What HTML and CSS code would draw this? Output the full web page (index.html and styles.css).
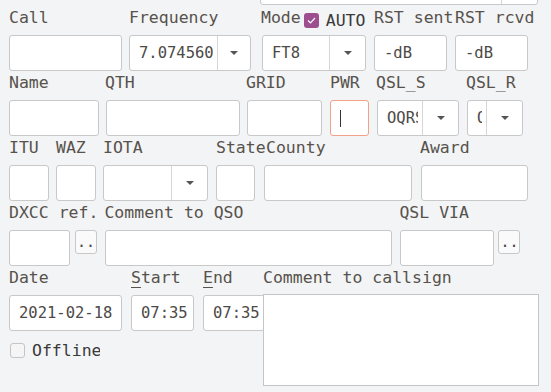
FILE: index.html
```html
<!DOCTYPE html>
<html lang="en">
<head>
    <meta charset="UTF-8">
    <title>QSO Entry</title>
    <link rel="stylesheet" href="styles.css">
</head>
<body>
    <div class="form">
        <!-- tail of the row above, scrolled out of view -->
        <div class="row prev">
            <div class="combo prev-combo">
                <span class="combo-text"></span>
                <span class="combo-btn"></span>
            </div>
        </div>

        <div class="row">
            <div class="field f-call">
                <label>Call</label>
                <input class="input" type="text">
            </div>
            <div class="field f-freq">
                <label>Frequency</label>
                <div class="combo">
                    <span class="combo-text">7.074560</span>
                    <span class="combo-btn"><i class="arrow"></i></span>
                </div>
            </div>
            <div class="field f-mode">
                <label class="mode-label">
                    <span>Mode</span>
                    <span class="check checked">
                        <svg width="15" height="15" viewBox="0 0 15 15"><path d="M4 7.5 L6.5 10 L11 5" fill="none" stroke="#fff" stroke-width="1.2"/></svg>
                    </span>
                    <span class="check-text auto">AUTO</span>
                </label>
                <div class="combo">
                    <span class="combo-text">FT8</span>
                    <span class="combo-btn"><i class="arrow"></i></span>
                </div>
            </div>
            <div class="field f-rst">
                <label>RST sent</label>
                <input class="input" type="text" value="-dB">
            </div>
            <div class="field f-rst">
                <label>RST rcvd</label>
                <input class="input" type="text" value="-dB">
            </div>
        </div>

        <div class="row">
            <div class="field f-name">
                <label>Name</label>
                <input class="input" type="text">
            </div>
            <div class="field f-qth">
                <label>QTH</label>
                <input class="input" type="text">
            </div>
            <div class="field f-grid">
                <label>GRID</label>
                <input class="input" type="text">
            </div>
            <div class="field f-pwr">
                <label>PWR</label>
                <div class="input focus"><span class="caret"></span></div>
            </div>
            <div class="field f-qsls">
                <label>QSL_S</label>
                <div class="combo">
                    <span class="combo-text">OQRS</span>
                    <span class="combo-btn"><i class="arrow"></i></span>
                </div>
            </div>
            <div class="field f-qslr">
                <label>QSL_R</label>
                <div class="combo">
                    <span class="combo-text">Q</span>
                    <span class="combo-btn"><i class="arrow"></i></span>
                </div>
            </div>
        </div>

        <div class="row">
            <div class="field f-itu">
                <label>ITU</label>
                <input class="input" type="text">
            </div>
            <div class="field f-waz">
                <label>WAZ</label>
                <input class="input" type="text">
            </div>
            <div class="field f-iota">
                <label>IOTA</label>
                <div class="combo">
                    <span class="combo-text"></span>
                    <span class="combo-btn"><i class="arrow"></i></span>
                </div>
            </div>
            <div class="field f-state">
                <label>State</label>
                <input class="input" type="text">
            </div>
            <div class="field f-county">
                <label>County</label>
                <input class="input" type="text">
            </div>
            <div class="field f-award">
                <label>Award</label>
                <input class="input" type="text">
            </div>
        </div>

        <div class="row">
            <div class="field f-dxcc">
                <label>DXCC ref.</label>
                <div class="inline">
                    <input class="input" type="text">
                    <button class="dots">..</button>
                </div>
            </div>
            <div class="field f-comment">
                <label>Comment to QSO</label>
                <input class="input" type="text">
            </div>
            <div class="field f-via">
                <label>QSL VIA</label>
                <div class="inline">
                    <input class="input" type="text">
                    <button class="dots">..</button>
                </div>
            </div>
        </div>

        <div class="bottom">
            <div class="left">
                <div class="row">
                    <div class="field f-date">
                        <label>Date</label>
                        <input class="input" type="text" value="2021-02-18">
                    </div>
                    <div class="field f-start">
                        <label><u>S</u>tart</label>
                        <input class="input" type="text" value="07:35">
                    </div>
                    <div class="field f-end">
                        <label><u>E</u>nd</label>
                        <input class="input" type="text" value="07:35">
                    </div>
                </div>
                <div class="offline">
                    <span class="check"></span>
                    <span class="check-text">Offline</span>
                </div>
            </div>
            <div class="field f-memo">
                <label>Comment to callsign</label>
                <textarea class="memo"></textarea>
            </div>
        </div>
    </div>
</body>
</html>
```

FILE: styles.css
```css
body {
    margin: 0;
    background: #f3f4f6;
    font-family: "DejaVu Sans Mono", monospace;
    font-size: 16.5px;
    color: #57524c;
    overflow: hidden;
}
.form {
    padding-left: 9px;
}
.row {
    display: flex;
    height: 65px;
}
.prev {
    height: 5px;
    margin-bottom: 1px;
    overflow: hidden;
    align-items: flex-end;
}
.prev-combo {
    margin-left: 251px;
    width: 278px;
    flex-shrink: 0;
}
.field {
    display: flex;
    flex-direction: column;
    flex-shrink: 0;
}
.field label {
    display: block;
    height: 29px;
    line-height: 23px;
    white-space: nowrap;
}
u {
    text-underline-offset: 4px;
}
.input {
    box-sizing: border-box;
    width: 100%;
    height: 36px;
    margin: 0;
    padding: 0 0 0 9px;
    border: 1px solid #c8c8c8;
    border-radius: 3px;
    background: #fff;
    font: inherit;
    font-size: 15.5px;
    color: #4d4a47;
    outline: none;
}
.focus {
    display: flex;
    align-items: center;
    border-color: #f2a286;
}
.caret {
    width: 1px;
    height: 17px;
    background: #333;
}
.combo {
    box-sizing: border-box;
    display: flex;
    height: 36px;
    border: 1px solid #c8c8c8;
    border-radius: 3px;
    background: #fff;
    overflow: hidden;
}
.combo-text {
    flex: 1;
    margin-right: 4px;
    padding-left: 9px;
    font-size: 15.5px;
    line-height: 34px;
    overflow: hidden;
    white-space: nowrap;
    color: #4d4a47;
}
.combo-btn {
    width: 35px;
    border-left: 1px solid #d6d6d6;
    display: flex;
    align-items: center;
    justify-content: center;
}
.arrow {
    width: 0;
    height: 0;
    border-left: 4.5px solid transparent;
    border-right: 4.5px solid transparent;
    border-top: 4.5px solid #555;
}
.inline {
    display: flex;
    align-items: flex-start;
}
.dots {
    box-sizing: border-box;
    width: 22px;
    height: 24px;
    padding: 0;
    border: 1px solid #c8c8c8;
    border-radius: 3px;
    background: #fafafa;
    font: inherit;
    font-size: 15px;
    line-height: 20px;
    color: #444;
    flex-shrink: 0;
}
.check {
    display: block;
    box-sizing: border-box;
    width: 15px;
    height: 15px;
    border: 1px solid #c5c5c5;
    border-radius: 3px;
    background: #f5f5f5;
    flex-shrink: 0;
}
.checked {
    border: none;
    background: #9c4e8f;
}
.check svg {
    display: block;
}
.check-text {
    color: #3a3a3a;
}

/* row 1 */
.f-call { width: 113px; }
.f-freq { width: 122px; margin-left: 7px; }
.f-freq .combo-btn { width: 32px; }
.f-mode { width: 104px; margin-left: 11px; }
.f-rst { width: 73px; margin-left: 8px; }
.field .mode-label {
    display: flex;
    align-items: flex-start;
    margin-left: -1px;
}
.mode-label .check {
    margin: 7px 0 0 3px;
}
.auto {
    margin-left: 7px;
    padding-top: 3px;
}

/* row 2 */
.f-name { width: 90px; }
.f-qth { width: 134px; margin-left: 7px; }
.f-grid { width: 75px; margin-left: 7px; }
.f-pwr { width: 39px; margin-left: 8px; }
.f-qsls { width: 82px; margin-left: 8px; }
.f-qslr { width: 56px; margin-left: 8px; }
.f-qth label, .f-grid label, .f-qsls label, .f-qslr label {
    margin-left: -1px;
}

/* row 3 */
.f-itu { width: 40px; }
.f-waz { width: 40px; margin-left: 7px; }
.f-iota { width: 105px; margin-left: 7px; }
.f-state { width: 39px; margin-left: 8px; }
.f-county { width: 148px; margin-left: 9px; }
.f-county label { padding-left: 2px; }
.f-award { width: 107px; margin-left: 9px; }
.f-award label { margin-left: -1px; }

/* row 4 */
.f-dxcc .input { width: 61px; }
.f-dxcc .dots { margin-left: 5px; }
.f-comment { width: 287px; margin-left: 7px; }
.f-via { margin-left: 8px; }
.f-via .input { width: 94px; }
.f-via .dots { margin-left: 4px; }
.f-comment label, .f-via label { margin-left: -1px; }

/* bottom rows */
.bottom {
    display: flex;
}
.f-date { width: 113px; }
.f-start { width: 63px; margin-left: 9px; }
.f-end { width: 62px; margin-left: 9px; }
.offline {
    display: flex;
    align-items: center;
    gap: 7px;
    margin: 12px 0 0 1px;
    width: 90px;
    overflow: hidden;
    white-space: nowrap;
    line-height: 15px;
}
.f-memo {
    margin-left: -2px;
}
.memo {
    box-sizing: border-box;
    width: 276px;
    height: 92px;
    margin: -1px 0 0;
    border: 1px solid #c2c5ca;
    border-radius: 0;
    background: #fff;
    resize: none;
    outline: none;
}
```
